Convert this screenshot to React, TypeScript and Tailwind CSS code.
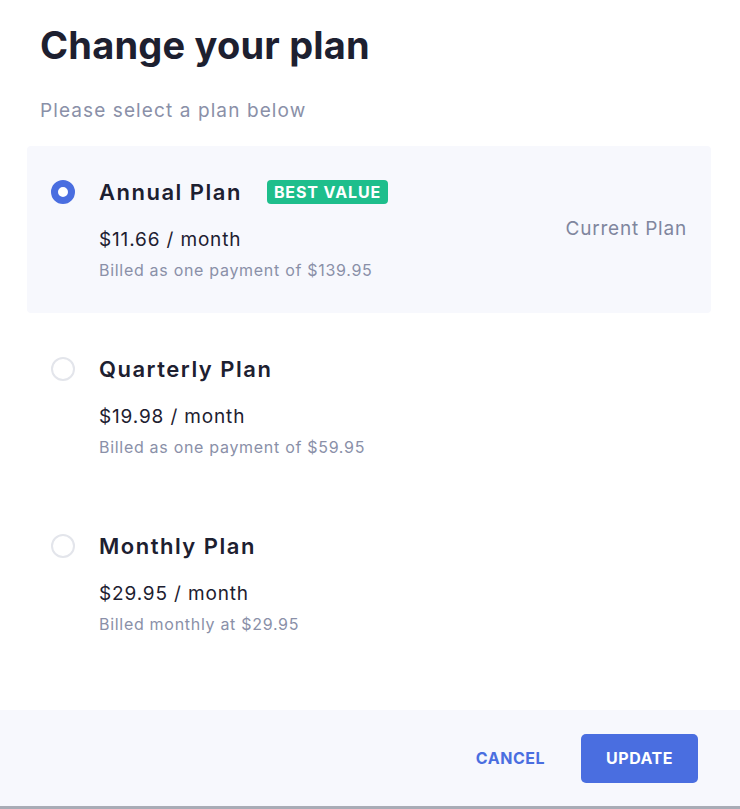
import React, { useState } from 'react';

interface Plan {
  id: string;
  name: string;
  price: string;
  billed: string;
  badge?: string;
  current?: boolean;
}

const plans: Plan[] = [
  {
    id: 'annual',
    name: 'Annual Plan',
    price: '$11.66 / month',
    billed: 'Billed as one payment of $139.95',
    badge: 'BEST VALUE',
    current: true,
  },
  {
    id: 'quarterly',
    name: 'Quarterly Plan',
    price: '$19.98 / month',
    billed: 'Billed as one payment of $59.95',
  },
  {
    id: 'monthly',
    name: 'Monthly Plan',
    price: '$29.95 / month',
    billed: 'Billed monthly at $29.95',
  },
];

function Radio({ checked }: { checked: boolean }) {
  return checked ? (
    <div className="w-6 h-6 rounded-full border-[7px] border-[#4a6ee0] bg-white shrink-0" />
  ) : (
    <div className="w-6 h-6 rounded-full border-2 border-[#e3e5eb] bg-white shrink-0" />
  );
}

export default function App() {
  const [selected, setSelected] = useState('annual');

  return (
    <div className="w-[740px] h-[809px] bg-white flex flex-col font-['Inter','Open_Sans',sans-serif]">
      <div className="px-[40px] pt-[22px]">
        <h1 className="text-[38px] leading-[46px] font-bold text-[#1d2030] tracking-[0.2px]">
          Change your plan
        </h1>
        <p className="mt-[31px] text-[19px] leading-[24px] text-[#8a90a8] tracking-[1.1px]">
          Please select a plan below
        </p>
      </div>

      <div className="mt-[23px] ml-[27px] w-[684px] flex flex-col gap-[10px]">
        {plans.map((plan) => (
          <div
            key={plan.id}
            onClick={() => setSelected(plan.id)}
            className={`flex items-center rounded-[4px] pl-[24px] pr-[24px] py-[32px] cursor-pointer ${
              selected === plan.id ? 'bg-[#f7f8fd]' : 'bg-white'
            }`}
          >
            <div className="flex-1 flex">
              <div className="h-[28px] flex items-center">
                <Radio checked={selected === plan.id} />
              </div>
              <div className="ml-[24px]">
                <div className="h-[28px] flex items-center gap-[25px]">
                  <span className="text-[22px] font-semibold text-[#1d2030] tracking-[1.5px]">
                    {plan.name}
                  </span>
                  {plan.badge && (
                    <span className="h-[24px] px-[7px] flex items-center rounded-[4px] bg-[#1ebe8c] text-white text-[16px] font-bold tracking-[0.9px]">
                      {plan.badge}
                    </span>
                  )}
                </div>
                <p className="mt-[22px] text-[19px] leading-[24px] text-[#1d2030] tracking-[0.85px]">
                  {plan.price}
                </p>
                <p className="mt-[7px] text-[16px] leading-[22px] text-[#8a90a8] tracking-[0.7px]">
                  {plan.billed}
                </p>
              </div>
            </div>
            {plan.current && (
              <span className="text-[19px] text-[#80869e] tracking-[0.8px]">Current Plan</span>
            )}
          </div>
        ))}
      </div>

      <div className="mt-auto h-[99px] bg-[#f7f8fd] border-b-[3px] border-[#a9acb6] flex items-center justify-end gap-[36px] pr-[42px]">
        <button className="text-[16px] font-bold text-[#4a6ee0] tracking-[0.5px]">CANCEL</button>
        <button className="w-[117px] h-[49px] rounded-[5px] bg-[#4a6ee0] text-white text-[16px] font-bold tracking-[0.5px]">
          UPDATE
        </button>
      </div>
    </div>
  );
}
